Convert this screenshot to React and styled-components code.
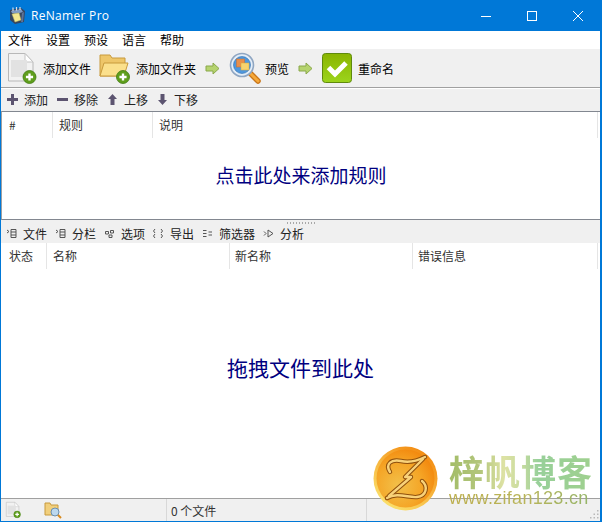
import React from 'react';
import styled, { createGlobalStyle } from 'styled-components';

const Global = createGlobalStyle`
  html, body { margin: 0; padding: 0; background: #fff; }
  * { box-sizing: border-box; }
`;

const Window = styled.div`
  position: relative;
  width: 602px;
  height: 522px;
  display: flex;
  flex-direction: column;
  overflow: hidden;
  background: #f0f0f0;
  border: 1px solid #0078d7;
  border-top: none;
  border-right-width: 2px;
  font-family: "Noto Sans CJK SC", "Noto Sans", sans-serif;
  font-size: 12px;
  color: #000;
`;

const TitleBar = styled.div`
  height: 31px;
  flex: none;
  margin-right: -1px;
  background: #0078d7;
  display: flex;
  align-items: center;
  padding-left: 8px;
  color: #fff;
`;

const AppTitle = styled.span`
  margin-left: 5px;
  font-family: "Open Sans", "Noto Sans", sans-serif;
  font-size: 12px;
  letter-spacing: 0.3px;
  flex: 1;
`;

const WinButton = styled.div`
  width: 46px;
  height: 30px;
  display: flex;
  align-items: center;
  justify-content: center;
`;

const MenuBar = styled.div`
  height: 18px;
  flex: none;
  background: #fff;
  display: flex;
  align-items: center;
  padding-left: 7px;
  gap: 14px;
  line-height: 18px;
`;

const MainToolbar = styled.div`
  height: 39px;
  flex: none;
  display: flex;
  align-items: center;
  padding-left: 5px;
  border-bottom: 1px solid #a0a0a0;
`;

const ToolLabel = styled.span`
  margin-left: ${p => p.$gap}px;
  margin-right: ${p => p.$after || 0}px;
`;

const Arrow = styled.svg`
  flex: none;
  margin: 0 ${p => p.$right}px 0 ${p => p.$left}px;
`;

const SubToolbar = styled.div`
  height: ${p => p.$h}px;
  flex: none;
  display: flex;
  align-items: center;
  padding-left: ${p => p.$pad}px;
  padding-bottom: 2px;
  gap: ${p => p.$space}px;
  color: #222;
`;

const SubButton = styled.div`
  display: flex;
  align-items: center;
  gap: ${p => p.$gap}px;
`;

const Divider = styled.div`
  height: 1px;
  flex: none;
  background: #fff;
`;

const ListPane = styled.div`
  background: #fff;
  display: flex;
  flex-direction: column;
  flex: ${p => (p.$grow ? '1' : 'none')};
  height: ${p => (p.$grow ? 'auto' : `${p.$h}px`)};
  border-top: ${p => (p.$framed ? '1px solid #828790' : 'none')};
  border-bottom: ${p => (p.$framed ? '1px solid #828790' : 'none')};
  border-left: ${p => (p.$framed ? '1px solid #a0a0a0' : 'none')};
`;

const HeaderRow = styled.div`
  height: ${p => p.$h}px;
  flex: none;
  display: flex;
  padding-right: 2px;
`;

const HeaderCell = styled.div`
  width: ${p => p.$w}px;
  flex: ${p => (p.$fill ? '1' : 'none')};
  padding-left: ${p => p.$pad}px;
  padding-bottom: 2px;
  display: flex;
  align-items: center;
  color: #333;
  border-right: 1px solid #e5e5e5;
`;

const Hint = styled.div`
  flex: 1;
  display: flex;
  align-items: center;
  justify-content: center;
  color: #000080;
  font-size: ${p => p.$size}px;
  padding-bottom: ${p => p.$lift}px;
`;

const Splitter = styled.div`
  height: 5px;
  flex: none;
  display: flex;
  justify-content: center;
  align-items: center;
`;

const Grip = styled.div`
  width: 30px;
  height: 2px;
  background-image: radial-gradient(circle, #a8a8a8 0.7px, transparent 0.8px);
  background-size: 3px 2px;
`;

const StatusBar = styled.div`
  height: 23px;
  flex: none;
  display: flex;
  border-top: 1px solid #a0a0a0;
`;

const StatusCell = styled.div`
  width: ${p => p.$w}px;
  flex: ${p => (p.$fill ? '1' : 'none')};
  display: flex;
  align-items: center;
  padding-left: ${p => p.$pad || 0}px;
  gap: ${p => p.$gap || 0}px;
  color: #333;
  border-right: ${p => (p.$line ? '1px solid #d8d8d8' : 'none')};
`;

const SizeGrip = styled.svg`
  position: absolute;
  right: 1px;
  bottom: 1px;
`;

const Watermark = styled.div`
  position: absolute;
  left: 372px;
  top: 446px;
  display: flex;
  pointer-events: none;
`;

const BrandText = styled.div`
  margin: 4px 0 0 11px;
  display: flex;
  flex-direction: column;
`;

const BrandName = styled.div`
  font-size: 35px;
  line-height: 41px;
  font-weight: 700;
  letter-spacing: 1px;
  white-space: nowrap;
  background: linear-gradient(90deg, #a3bd68 0%, #b3c67c 22%, #dde2a4 38%, #c9dca0 50%, #98d09a 62%, #9fd08e 100%);
  -webkit-background-clip: text;
  background-clip: text;
  color: transparent;
`;

const BrandUrl = styled.div`
  font-family: "Liberation Sans", sans-serif;
  font-size: 18px;
  line-height: 15px;
  letter-spacing: 0.3px;
  white-space: nowrap;
  background: linear-gradient(90deg, #bcae4c 0%, #b8b45a 55%, #93b56a 100%);
  -webkit-background-clip: text;
  background-clip: text;
  color: transparent;
`;

const AppIcon = () => (
  <svg width="17" height="18" viewBox="0 0 17 18">
    <path d="M1 3L12 1L16 4L15 15L6 17L1 13Z" fill="#36465f" />
    <path d="M2 4L12 2L14 5L7 7L3 6Z" fill="#7f9bc4" />
    <path d="M3 7L10 6L12 13L6 15Z" fill="#f4e88e" stroke="#c2b860" strokeWidth="0.5" />
    <path d="M4 0.5V4M7.5 0V3.5M11 0V3" stroke="#d8dde6" strokeWidth="1.2" />
    <path d="M13 6L15 5L14 15L12 15Z" fill="#5e7398" />
  </svg>
);

const Plus = ({ x, y, r }) => (
  <g>
    <circle cx={x} cy={y} r={r} fill="#5f9e1c" stroke="#3f7a10" strokeWidth="0.8" />
    <path d={`M${x - r * 0.55} ${y}H${x + r * 0.55}M${x} ${y - r * 0.55}V${y + r * 0.55}`} stroke="#fff" strokeWidth={r * 0.36} />
  </g>
);

const PageIcon = ({ size = 31 }) => (
  <svg width={size} height={size + 2} viewBox="0 0 31 33">
    <path d="M2.5 1.5H19L27 10V29H2.5Z" fill="#f2f2f2" stroke="#b8b8b8" />
    <path d="M19 1.5V10H27Z" fill="#fff" stroke="#c4c4c4" />
    <rect x="5" y="8" width="16" height="17" fill="#e2e2e2" />
    <Plus x={23.5} y={25} r={6.5} />
  </svg>
);

const FolderIcon = () => (
  <svg width="31" height="31" viewBox="0 0 31 31">
    <path d="M1 2H11L13 5H26V23H1Z" fill="#eec669" stroke="#c89a3c" />
    <path d="M1 23L5 10H29L25 23Z" fill="#fbe08c" stroke="#c89a3c" />
    <Plus x={24} y={24} r={6.5} />
  </svg>
);

const MagnifierIcon = () => (
  <svg width="32" height="32" viewBox="0 0 32 32">
    <path d="M20 20L29 29" stroke="#c9761a" strokeWidth="5.5" strokeLinecap="round" />
    <path d="M20 20L29 29" stroke="#f6a93a" strokeWidth="3" strokeLinecap="round" />
    <circle cx="13" cy="13" r="11.5" fill="#e4eef8" stroke="#8fa6c2" strokeWidth="1.6" />
    <circle cx="13" cy="13" r="8.5" fill="#4f97dc" stroke="#2f6fae" strokeWidth="0.6" />
    <rect x="7.5" y="7" width="8" height="8" fill="#e98f4a" stroke="#c96f2e" strokeWidth="0.5" />
    <rect x="12" y="11" width="8" height="7" fill="#f6d36e" stroke="#d6a83e" strokeWidth="0.5" />
  </svg>
);

const RenameIcon = () => (
  <svg width="32" height="32" viewBox="0 0 32 32">
    <defs>
      <linearGradient id="rn" x1="0" y1="0" x2="0" y2="1">
        <stop offset="0" stopColor="#8ab400" />
        <stop offset="1" stopColor="#9cd41c" />
      </linearGradient>
    </defs>
    <rect x="1.5" y="1.5" width="29" height="29" rx="3" fill="url(#rn)" stroke="#5f8a0c" />
    <path d="M7.5 15.5L14 22L25 11" fill="none" stroke="#fff" strokeWidth="5" />
  </svg>
);

const NextArrow = ({ left, right }) => (
  <Arrow $left={left} $right={right} width="15" height="13" viewBox="0 0 15 13">
    <path d="M1 4H8V1L14 6.5L8 12V9H1Z" fill="#b5d36e" stroke="#8aa84a" />
  </Arrow>
);

const SmallGlyph = ({ d }) => (
  <svg width="13" height="13" viewBox="0 0 13 13">
    <path d={d} fill="#5c5470" />
  </svg>
);

const LineGlyph = ({ d }) => (
  <svg width="11" height="11" viewBox="0 0 11 11">
    <path d={d} fill="none" stroke="#555" strokeWidth="1" />
  </svg>
);

const ZLogo = () => (
  <svg width="65" height="65" viewBox="0 0 65 65">
    <defs>
      <radialGradient id="zl" cx="0.38" cy="0.62" r="0.75">
        <stop offset="0" stopColor="#f2c04a" />
        <stop offset="0.55" stopColor="#f5a526" />
        <stop offset="1" stopColor="#f27f06" />
      </radialGradient>
      <linearGradient id="zrim" x1="0.8" y1="0.05" x2="0.2" y2="0.95">
        <stop offset="0" stopColor="#f38a10" />
        <stop offset="1" stopColor="#fbe26e" />
      </linearGradient>
    </defs>
    <circle cx="32.5" cy="32.5" r="32" fill="url(#zrim)" />
    <circle cx="32.5" cy="32.5" r="29" fill="url(#zl)" />
    <g fill="none" strokeLinecap="round" strokeLinejoin="round">
      <g stroke="#8f4f0c" strokeWidth="4.4">
        <path d="M17 26C12 18 18 13 28 15C36 17 44 15 52 11" />
        <path d="M50 13L32 31H38L16 50" />
        <path d="M14 52C24 46 36 52 44 51C54 50 55 40 49 35" />
      </g>
      <g stroke="#f8d27a" strokeWidth="2.4">
        <path d="M17 26C12 18 18 13 28 15C36 17 44 15 52 11" />
        <path d="M50 13L32 31H38L16 50" />
        <path d="M14 52C24 46 36 52 44 51C54 50 55 40 49 35" />
      </g>
    </g>
  </svg>
);

const ruleTools = [
  ['添加', 'M5 1H8V5H12V8H8V12H5V8H1V5H5Z'],
  ['移除', 'M1 5H12V8H1Z'],
  ['上移', 'M6.5 1L11 6H8.5V12H4.5V6H2Z'],
  ['下移', 'M4.5 1H8.5V7H11L6.5 12L2 7H4.5Z'],
];

const fileTools = [
  ['文件', 'M1 2L3 3.5L1 5M5 1.5V9.5H10V1.5ZM5 4H10M5 7H10'],
  ['分栏', 'M1 2L3 3.5L1 5M5 1.5V9.5H10V1.5ZM5 4H10M5 7H10'],
  ['选项', 'M1.5 3.5H4.5V6H1.5ZM6.5 2.5H9.5V5H6.5ZM5 7H8V9.5H5Z'],
  ['导出', 'M2 1L.5 3L2 5M2 6L.5 8L2 10M8 1L9.5 3L8 5M8 6L9.5 8L8 10'],
  ['筛选器', 'M1 2.5H4.5M1 5.5H4.5M1 8.5H4.5M6.5 4H10M6.5 7H10'],
  ['分析', 'M1 3.5L3 5.5L1 7.5M5 2V9L10 5.5Z'],
];

export default function App() {
  return (
    <Window>
      <Global />
      <TitleBar>
        <AppIcon />
        <AppTitle>ReNamer Pro</AppTitle>
        <WinButton>
          <svg width="10" height="10" viewBox="0 0 10 10"><path d="M0 5.5H10" stroke="#fff" /></svg>
        </WinButton>
        <WinButton>
          <svg width="10" height="10" viewBox="0 0 10 10"><rect x=".5" y=".5" width="9" height="9" fill="none" stroke="#fff" /></svg>
        </WinButton>
        <WinButton>
          <svg width="10" height="10" viewBox="0 0 10 10"><path d="M0 0L10 10M10 0L0 10" stroke="#fff" /></svg>
        </WinButton>
      </TitleBar>
      <MenuBar>
        <span>文件</span><span>设置</span><span>预设</span><span>语言</span><span>帮助</span>
      </MenuBar>
      <MainToolbar>
        <PageIcon />
        <ToolLabel $gap={6} $after={8}>添加文件</ToolLabel>
        <FolderIcon />
        <ToolLabel $gap={6}>添加文件夹</ToolLabel>
        <NextArrow left={9} right={9} />
        <MagnifierIcon />
        <ToolLabel $gap={4}>预览</ToolLabel>
        <NextArrow left={9} right={8} />
        <RenameIcon />
        <ToolLabel $gap={5}>重命名</ToolLabel>
      </MainToolbar>
      <Divider />
      <SubToolbar $h={22} $pad={5} $space={8}>
        {ruleTools.map(([label, d]) => (
          <SubButton key={label} $gap={5}><SmallGlyph d={d} />{label}</SubButton>
        ))}
      </SubToolbar>
      <ListPane $h={109} $framed>
        <HeaderRow $h={26}>
          <HeaderCell $w={51} $pad={7}>#</HeaderCell>
          <HeaderCell $w={100} $pad={6}>规则</HeaderCell>
          <HeaderCell $fill $pad={6}>说明</HeaderCell>
        </HeaderRow>
        <Hint $size={19} $lift={9}>点击此处来添加规则</Hint>
      </ListPane>
      <Splitter><Grip /></Splitter>
      <SubToolbar $h={18} $pad={5} $space={8}>
        {fileTools.map(([label, d]) => (
          <SubButton key={label} $gap={6}><LineGlyph d={d} />{label}</SubButton>
        ))}
      </SubToolbar>
      <ListPane $grow>
        <HeaderRow $h={26}>
          <HeaderCell $w={46} $pad={8}>状态</HeaderCell>
          <HeaderCell $w={183} $pad={6}>名称</HeaderCell>
          <HeaderCell $w={183} $pad={5}>新名称</HeaderCell>
          <HeaderCell $fill $pad={5}>错误信息</HeaderCell>
        </HeaderRow>
        <Hint $size={21} $lift={33}>拖拽文件到此处</Hint>
      </ListPane>
      <StatusBar>
        <StatusCell $w={166} $pad={4} $gap={23} $line>
          <PageIcon size={16} />
          <svg width="18" height="17" viewBox="0 0 18 17">
            <path d="M1 1H6L7 3H14V13H1Z" fill="#f1cf7c" stroke="#c89a3c" />
            <circle cx="11" cy="10" r="4" fill="#bcd8ee" stroke="#6a8fb0" />
            <path d="M14 13L17 16" stroke="#d88a1c" strokeWidth="2" />
          </svg>
        </StatusCell>
        <StatusCell $w={200} $pad={4} $line>0 个文件</StatusCell>
        <StatusCell $fill />
      </StatusBar>
      <SizeGrip width="11" height="11" viewBox="0 0 11 11">
        <path d="M9 1h1.5v1.5H9zM5.5 4.5H7V6H5.5zM9 4.5h1.5V6H9zM2 8h1.5v1.5H2zM5.5 8H7v1.5H5.5zM9 8h1.5v1.5H9z" fill="#b8b8b8" />
      </SizeGrip>
      <Watermark>
        <ZLogo />
        <BrandText>
          <BrandName>梓帆博客</BrandName>
          <BrandUrl>www.zifan123.cn</BrandUrl>
        </BrandText>
      </Watermark>
    </Window>
  );
}
